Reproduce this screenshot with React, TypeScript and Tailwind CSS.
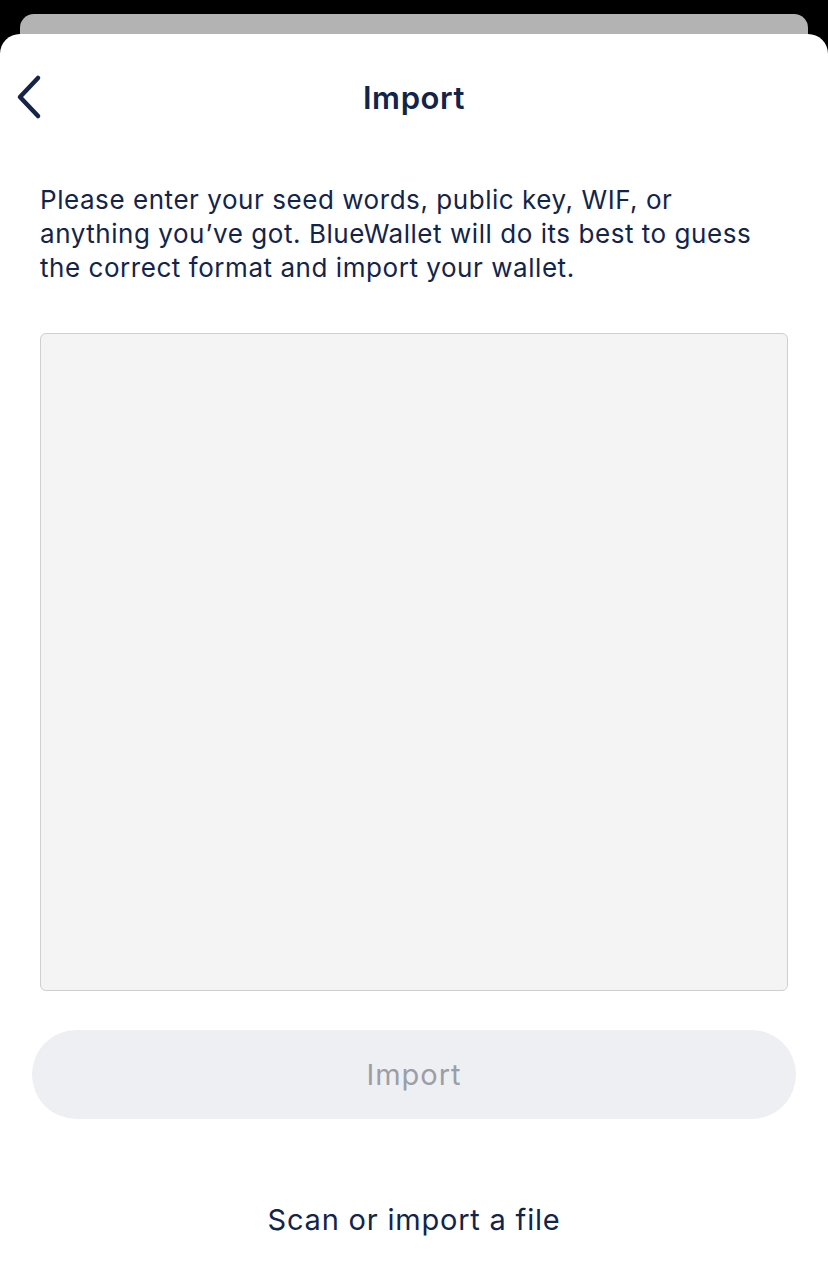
import React from "react";

export default function App() {
  return (
    <div className="w-[828px] h-[1261px] bg-black overflow-hidden flex flex-col" style={{ fontFamily: "Inter, 'Noto Sans', sans-serif" }}>
      <div className="pt-[14px] px-[20px]">
        <div className="h-[20px] bg-[#b3b3b3] rounded-t-[14px]" />
      </div>
      <div className="flex-1 bg-white rounded-t-[20px] flex flex-col">
        <div className="relative h-[96px] flex items-start justify-center pt-[44px]">
          <button className="absolute left-[12px] top-[39px] w-[32px] h-[48px] flex items-center justify-center">
            <svg width="30" height="46" viewBox="0 0 30 46" fill="none">
              <path d="M25 4 L7 23 L25 42" stroke="#14244b" strokeWidth="4.5" strokeLinecap="round" strokeLinejoin="round" />
            </svg>
          </button>
          <h1 className="text-[31px] leading-[40px] font-semibold text-[#13244a] tracking-[0.6px]">Import</h1>
        </div>
        <div className="px-[40px] pt-[53px]">
          <p className="text-[26px] leading-[34px] text-[#13244a] tracking-[0.55px] whitespace-nowrap">
            Please enter your seed words, public key, WIF, or<br />
            anything you’ve got. BlueWallet will do its best to guess<br />
            the correct format and import your wallet.
          </p>
        </div>
        <div className="px-[40px] mt-[48px]">
          <div className="h-[658px] bg-[#f4f4f5] border-[1.5px] border-[#cfcfd2] rounded-[6px]" />
        </div>
        <div className="px-[32px] mt-[39px]">
          <button className="w-full h-[89px] rounded-full bg-[#eeeff3] flex items-center justify-center text-[29px] text-[#9b9ea6] tracking-[1px]">
            Import
          </button>
        </div>
        <div className="flex justify-center mt-[81px]">
          <span className="text-[29px] leading-[40px] text-[#13244a] tracking-[0.8px]">Scan or import a file</span>
        </div>
      </div>
    </div>
  );
}
